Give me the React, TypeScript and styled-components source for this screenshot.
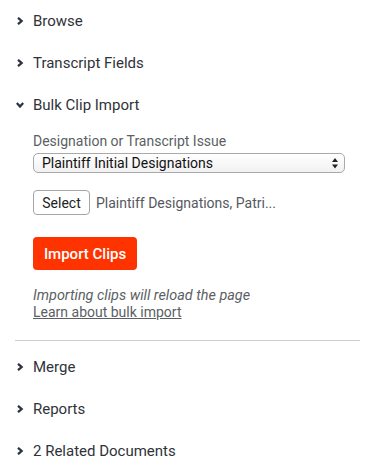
import React from "react";
import styled, { createGlobalStyle } from "styled-components";

const Global = createGlobalStyle`
  html, body { margin: 0; padding: 0; background: #fff; }
  body { font-family: Roboto, "Liberation Sans", Arial, sans-serif; color: #333; }
  * { box-sizing: border-box; }
`;

const Panel = styled.div`
  width: 374px;
  padding: 0 14px 0 15px;
`;

const Header = styled.div`
  display: flex;
  align-items: center;
  height: 42px;
  gap: 9px;
  padding-left: 1px;
  font-size: 15px;
  color: #2f3338;
  cursor: pointer;
`;

const ChevronBox = styled.span`
  display: inline-flex;
  width: 8px;
  justify-content: center;
  color: #2c3440;
`;

const Chevron: React.FC<{ open?: boolean }> = ({ open }) => (
  <ChevronBox>
    <svg width="8" height="8" viewBox="0 0 8 8" style={{ transform: open ? "rotate(90deg)" : undefined }}>
      <path d="M2 0.8 L5.6 4 L2 7.2" fill="none" stroke="currentColor" strokeWidth="2.3" strokeLinejoin="miter" />
    </svg>
  </ChevronBox>
);

const Body = styled.div`
  padding: 4px 0 20px 18px;
  display: flex;
  flex-direction: column;
`;

const Label = styled.div`
  font-size: 14px;
  color: #5b5f63;
  line-height: 18px;
  margin-top: 2px;
`;

const SelectWrap = styled.div`
  position: relative;
  width: 312px;
  margin-top: 3px;
`;

const NativeSelect = styled.select`
  appearance: none;
  -webkit-appearance: none;
  width: 100%;
  height: 20px;
  border: 1px solid #a9a9a9;
  border-radius: 5px;
  background: linear-gradient(#ffffff, #f1f1f1);
  font-family: Roboto, "Liberation Sans", Arial, sans-serif;
  font-size: 14px;
  color: #111;
  padding: 0 20px 0 8px;
  line-height: 18px;
  outline: none;
`;

const Arrows = styled.svg`
  position: absolute;
  right: 7px;
  top: 5px;
  pointer-events: none;
`;

const PickRow = styled.div`
  display: flex;
  align-items: center;
  gap: 6px;
  margin-top: 17px;
`;

const PickButton = styled.button`
  height: 25px;
  width: 57px;
  border: 1px solid #a6a6a6;
  border-radius: 4px;
  background: #fff;
  font-family: Roboto, "Liberation Sans", Arial, sans-serif;
  font-size: 14px;
  color: #222;
  padding: 0;
`;

const PickText = styled.span`
  font-size: 14px;
  color: #55595e;
`;

const ImportButton = styled.button`
  margin-top: 22px;
  align-self: flex-start;
  width: 104px;
  height: 33px;
  border: none;
  border-radius: 4px;
  background: #ff3300;
  color: #fff;
  font-family: Roboto, "Liberation Sans", Arial, sans-serif;
  font-size: 15px;
  font-weight: 500;
  padding: 0;
`;

const Note = styled.div`
  margin-top: 18px;
  font-size: 14.4px;
  line-height: 16px;
  color: #5b5f63;
  font-style: italic;
`;

const Link = styled.a`
  font-size: 14px;
  line-height: 16px;
  color: #5b5f63;
  text-decoration: underline;
  align-self: flex-start;
`;

const Divider = styled.hr`
  margin: 0 0 5px 0;
  border: none;
  border-top: 1px solid #cfcfcf;
  width: 345px;
`;

const App: React.FC = () => (
  <>
    <Global />
    <Panel>
      <Header><Chevron />Browse</Header>
      <Header><Chevron />Transcript Fields</Header>
      <Header><Chevron open />Bulk Clip Import</Header>
      <Body>
        <Label>Designation or Transcript Issue</Label>
        <SelectWrap>
          <NativeSelect defaultValue="pid">
            <option value="pid">Plaintiff Initial Designations</option>
          </NativeSelect>
          <Arrows width="6" height="11" viewBox="0 0 6 11">
            <path d="M3 0 L6 4 L0 4 Z" fill="#222" />
            <path d="M0 6.5 L6 6.5 L3 10.5 Z" fill="#222" />
          </Arrows>
        </SelectWrap>
        <PickRow>
          <PickButton>Select</PickButton>
          <PickText>Plaintiff Designations, Patri...</PickText>
        </PickRow>
        <ImportButton>Import Clips</ImportButton>
        <Note>Importing clips will reload the page</Note>
        <Link href="#">Learn about bulk import</Link>
      </Body>
      <Divider />
      <Header><Chevron />Merge</Header>
      <Header><Chevron />Reports</Header>
      <Header><Chevron />2 Related Documents</Header>
    </Panel>
  </>
);

export default App;
